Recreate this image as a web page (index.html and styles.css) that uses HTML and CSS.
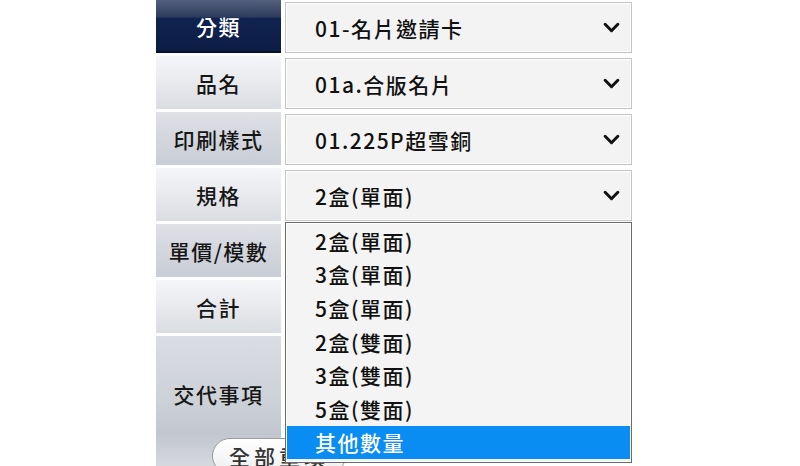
FILE: index.html
```html
<!DOCTYPE html>
<html lang="zh-Hant">
<head>
<meta charset="utf-8">
<link rel="stylesheet" href="styles.css">
</head>
<body>
<div class="form">
  <div class="row">
    <div class="label label-head">分類</div>
    <div class="field"><div class="select"><span>01-名片邀請卡</span><svg class="chev" viewBox="0 0 16 10"><path d="M2 2 L8 8 L14 2" /></svg></div></div>
  </div>
  <div class="row">
    <div class="label label-light">品名</div>
    <div class="field"><div class="select"><span>01a.合版名片</span><svg class="chev" viewBox="0 0 16 10"><path d="M2 2 L8 8 L14 2" /></svg></div></div>
  </div>
  <div class="row">
    <div class="label label-dark">印刷樣式</div>
    <div class="field"><div class="select"><span>01.225P超雪銅</span><svg class="chev" viewBox="0 0 16 10"><path d="M2 2 L8 8 L14 2" /></svg></div></div>
  </div>
  <div class="row">
    <div class="label label-light">規格</div>
    <div class="field"><div class="select"><span>2盒(單面)</span><svg class="chev" viewBox="0 0 16 10"><path d="M2 2 L8 8 L14 2" /></svg></div></div>
  </div>
  <div class="row">
    <div class="label label-dark">單價/模數</div>
    <div class="field"></div>
  </div>
  <div class="row">
    <div class="label label-light">合計</div>
    <div class="field"></div>
  </div>
  <div class="row row-tall">
    <div class="label label-notes">
      <div class="notes-text">交代事項</div>
      <div class="btn-row"><span class="pill">全部重填</span></div>
    </div>
    <div class="field"></div>
  </div>

  <ul class="dropdown">
    <li>2盒(單面)</li>
    <li>3盒(單面)</li>
    <li>5盒(單面)</li>
    <li>2盒(雙面)</li>
    <li>3盒(雙面)</li>
    <li>5盒(雙面)</li>
    <li class="active">其他數量</li>
  </ul>
</div>
</body>
</html>
```

FILE: styles.css
```css
* { box-sizing: border-box; }
html, body {
  margin: 0;
  padding: 0;
  background: #ffffff;
  overflow: hidden;
}
body {
  font-family: "Noto Sans CJK TC", "Noto Sans", sans-serif;
  font-size: 21px;
  font-weight: 500;
  letter-spacing: 1.5px;
  color: #111;
}
.form {
  position: relative;
  margin-left: 156px;
  width: 476px;
  display: flex;
  flex-direction: column;
  gap: 3px;
}
.row {
  display: flex;
  gap: 4px;
  height: 53px;
}
.row-tall { height: 140px; }
.label {
  width: 125px;
  flex: none;
  display: flex;
  align-items: center;
  justify-content: center;
  color: #161616;
  white-space: nowrap;
}
.label-head {
  color: #ffffff;
  background: linear-gradient(#53607c 0%, #2e3d5f 33%, #102350 36%, #0c1d45 100%);
  border-bottom: 2px solid #06112b;
}
.label-light {
  background: linear-gradient(#f5f6f8 0%, #e6e8ec 55%, #dadde2 100%);
}
.label-dark {
  background: linear-gradient(#dfe1e6 0%, #d2d5dc 55%, #c9cdd5 100%);
}
.label-notes {
  flex-direction: column;
  justify-content: flex-start;
  align-items: stretch;
  overflow: visible;
  background: linear-gradient(#dadde3 0%, #cdd1d8 45%, #c2c6cf 70%, #dcdee2 100%);
}
.notes-text {
  height: 102px;
  display: flex;
  align-items: center;
  justify-content: center;
  padding-top: 14px;
}
.btn-row {
  display: flex;
  padding-left: 56px;
}
.pill {
  flex: none;
  white-space: nowrap;
  border: 1px solid #9a9a9a;
  border-radius: 20px;
  background: linear-gradient(#ffffff, #eeeeee);
  padding: 4px 16px 4px 16px;
  height: 36px;
  line-height: 26px;
  color: #333;
  letter-spacing: 4px;
}
.field {
  flex: 1;
  padding-top: 2px;
}
.select {
  height: 51px;
  border: 1px solid #c4c4c4;
  box-shadow: inset 0 0 0 1px #ffffff;
  background: #f3f3f3;
  display: flex;
  align-items: center;
  justify-content: space-between;
  padding: 0 11px 0 29px;
}
.chev {
  width: 17px;
  height: 11px;
}
.chev path {
  fill: none;
  stroke: #111;
  stroke-width: 2.8;
  stroke-linecap: round;
  stroke-linejoin: round;
}
.dropdown {
  position: absolute;
  left: 129px;
  top: 222px;
  width: 347px;
  height: 241px;
  margin: 0;
  padding: 1px 0 0 0;
  list-style: none;
  background: #f4f4f4;
  border: 1px solid #6a6a6a;
  box-shadow: inset 0 0 0 1px #ffffff;
}
.dropdown li {
  height: 33.6px;
  display: flex;
  align-items: center;
  padding-left: 29px;
}
.dropdown li.active {
  background: #0a8df2;
  color: #ffffff;
  margin: 0 1px;
  padding-left: 28px;
}
```
